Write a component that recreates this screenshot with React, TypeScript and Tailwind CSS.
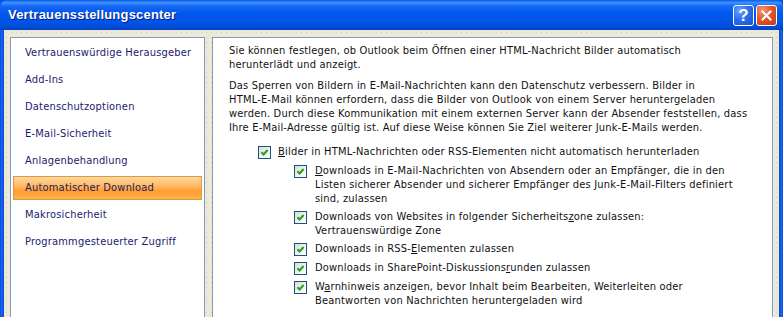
import type { ReactNode } from "react";

const NAV = [
  "Vertrauenswürdige Herausgeber",
  "Add-Ins",
  "Datenschutzoptionen",
  "E-Mail-Sicherheit",
  "Anlagenbehandlung",
  "Automatischer Download",
  "Makrosicherheit",
  "Programmgesteuerter Zugriff",
];

const ACTIVE = "Automatischer Download";

function Checkbox() {
  return (
    <span className="mt-[1px] flex h-[13px] w-[13px] shrink-0 items-center justify-center border border-[#1c5180] bg-[linear-gradient(135deg,#dcdcd7_0%,#f4f4f0_60%,#ffffff_100%)]">
      <svg width="9" height="9" viewBox="0 0 9 9">
        <path d="M1.5 4.2 L3.6 6.4 L7.6 2" fill="none" stroke="#21a121" strokeWidth="2.1" />
      </svg>
    </span>
  );
}

function Option({ indent, gap, mt, children }: { indent: number; gap: number; mt: number; children: ReactNode }) {
  return (
    <div className="flex items-start" style={{ marginLeft: indent, marginTop: mt, columnGap: gap }}>
      <Checkbox />
      <div className="whitespace-nowrap">{children}</div>
    </div>
  );
}

function TitleBar() {
  return (
    <div className="relative flex h-[30px] shrink-0 items-center rounded-t-[7px] bg-[linear-gradient(180deg,#0a5ae6_0%,#3d92ff_9%,#1768f4_20%,#0058ee_45%,#0055e5_75%,#004ad6_92%,#0040c4_100%)] pl-[8px]">
      <span className="pb-[1px] font-['Liberation_Sans',sans-serif] text-[13px] font-bold text-white [text-shadow:1px_1px_0_#0a1a8a]">
        Vertrauensstellungscenter
      </span>
      <div className="ml-auto mr-[6px] flex gap-[2px]">
        <div className="flex h-[21px] w-[21px] items-center justify-center rounded-[3px] border border-white bg-[radial-gradient(circle_at_30%_25%,#6ea2ff_0%,#2d6ef0_45%,#1a50d6_100%)]">
          <span className="font-['Liberation_Sans',sans-serif] text-[17px] font-bold leading-none text-white">?</span>
        </div>
        <div className="flex h-[21px] w-[21px] items-center justify-center rounded-[3px] border border-white bg-[radial-gradient(circle_at_30%_25%,#f59a78_0%,#e2562d_45%,#c23a14_100%)]">
          <svg width="11" height="11" viewBox="0 0 11 11">
            <path d="M1.5 1.5 L9.5 9.5 M9.5 1.5 L1.5 9.5" stroke="#fff" strokeWidth="2" strokeLinecap="square" />
          </svg>
        </div>
      </div>
    </div>
  );
}

export default function App() {
  return (
    <div className="flex h-[317px] w-[783px] flex-col overflow-hidden bg-[#0054e3] font-['DejaVu_Sans_Condensed','Liberation_Sans',sans-serif] text-[11px] leading-[14px] tracking-[0.2px]">
      <TitleBar />
      <div className="flex min-h-0 flex-1">
        <div className="w-[4px] shrink-0 bg-[linear-gradient(to_right,#0a3bcf,#1a6cf3,#0e56e6,#0848d8)]" />
        <div className="flex flex-1 gap-[7px] bg-[#ece9d8] bg-[radial-gradient(circle,#d4d1bd_0.7px,transparent_0.9px)] bg-[length:5px_5px] px-[6px] pt-[7px]">
          <nav className="flex h-[300px] w-[195px] shrink-0 flex-col gap-[3px] border border-[#7f9db9] bg-white px-[2px] pt-[3px]">
            {NAV.map((item) => (
              <div
                key={item}
                className={
                  item === ACTIVE
                    ? "flex h-[24px] items-center border border-[#d99b3f] bg-[linear-gradient(180deg,#ffd89c_0%,#ffbb66_40%,#ff9d30_65%,#ffb24e_100%)] pl-[11px] text-[#1b1b5e]"
                    : "flex h-[24px] items-center border border-transparent pl-[11px] text-[#1b1b6b]"
                }
              >
                {item}
              </div>
            ))}
          </nav>

          <main className="h-[300px] flex-1 border border-[#7f9db9] bg-white pl-[16px] pt-[6px] text-[#111]">
            <p className="whitespace-nowrap">
              Sie können festlegen, ob Outlook beim Öffnen einer HTML-Nachricht Bilder automatisch
              <br />
              herunterlädt und anzeigt.
            </p>
            <p className="mt-[7px] whitespace-nowrap">
              Das Sperren von Bildern in E-Mail-Nachrichten kann den Datenschutz verbessern. Bilder in
              <br />
              HTML-E-Mail können erfordern, dass die Bilder von Outlook von einem Server heruntergeladen
              <br />
              werden. Durch diese Kommunikation mit einem externen Server kann der Absender feststellen, dass
              <br />
              Ihre E-Mail-Adresse gültig ist. Auf diese Weise können Sie Ziel weiterer Junk-E-Mails werden.
            </p>

            <Option indent={29} gap={7} mt={10}>
              <u>B</u>ilder in HTML-Nachrichten oder RSS-Elementen nicht automatisch herunterladen
            </Option>
            <Option indent={65} gap={8} mt={5}>
              <u>D</u>ownloads in E-Mail-Nachrichten von Absendern oder an Empfänger, die in den
              <br />
              Listen sicherer Absender und sicherer Empfänger des Junk-E-Mail-Filters definiert
              <br />
              sind, zulassen
            </Option>
            <Option indent={65} gap={8} mt={4}>
              Downloads von Websites in folgender Sicherheits<u>z</u>one zulassen:
              <br />
              Vertrauenswürdige Zone
            </Option>
            <Option indent={65} gap={8} mt={4}>
              Downloads in RSS-<u>E</u>lementen zulassen
            </Option>
            <Option indent={65} gap={8} mt={5}>
              Downloads in SharePoint-Diskussions<u>r</u>unden zulassen
            </Option>
            <Option indent={65} gap={8} mt={5}>
              W<u>a</u>rnhinweis anzeigen, bevor Inhalt beim Bearbeiten, Weiterleiten oder
              <br />
              Beantworten von Nachrichten heruntergeladen wird
            </Option>
          </main>
        </div>
        <div className="w-[4px] shrink-0 bg-[linear-gradient(to_right,#0848d8,#0e56e6,#1a6cf3,#0a3bcf)]" />
      </div>
    </div>
  );
}
